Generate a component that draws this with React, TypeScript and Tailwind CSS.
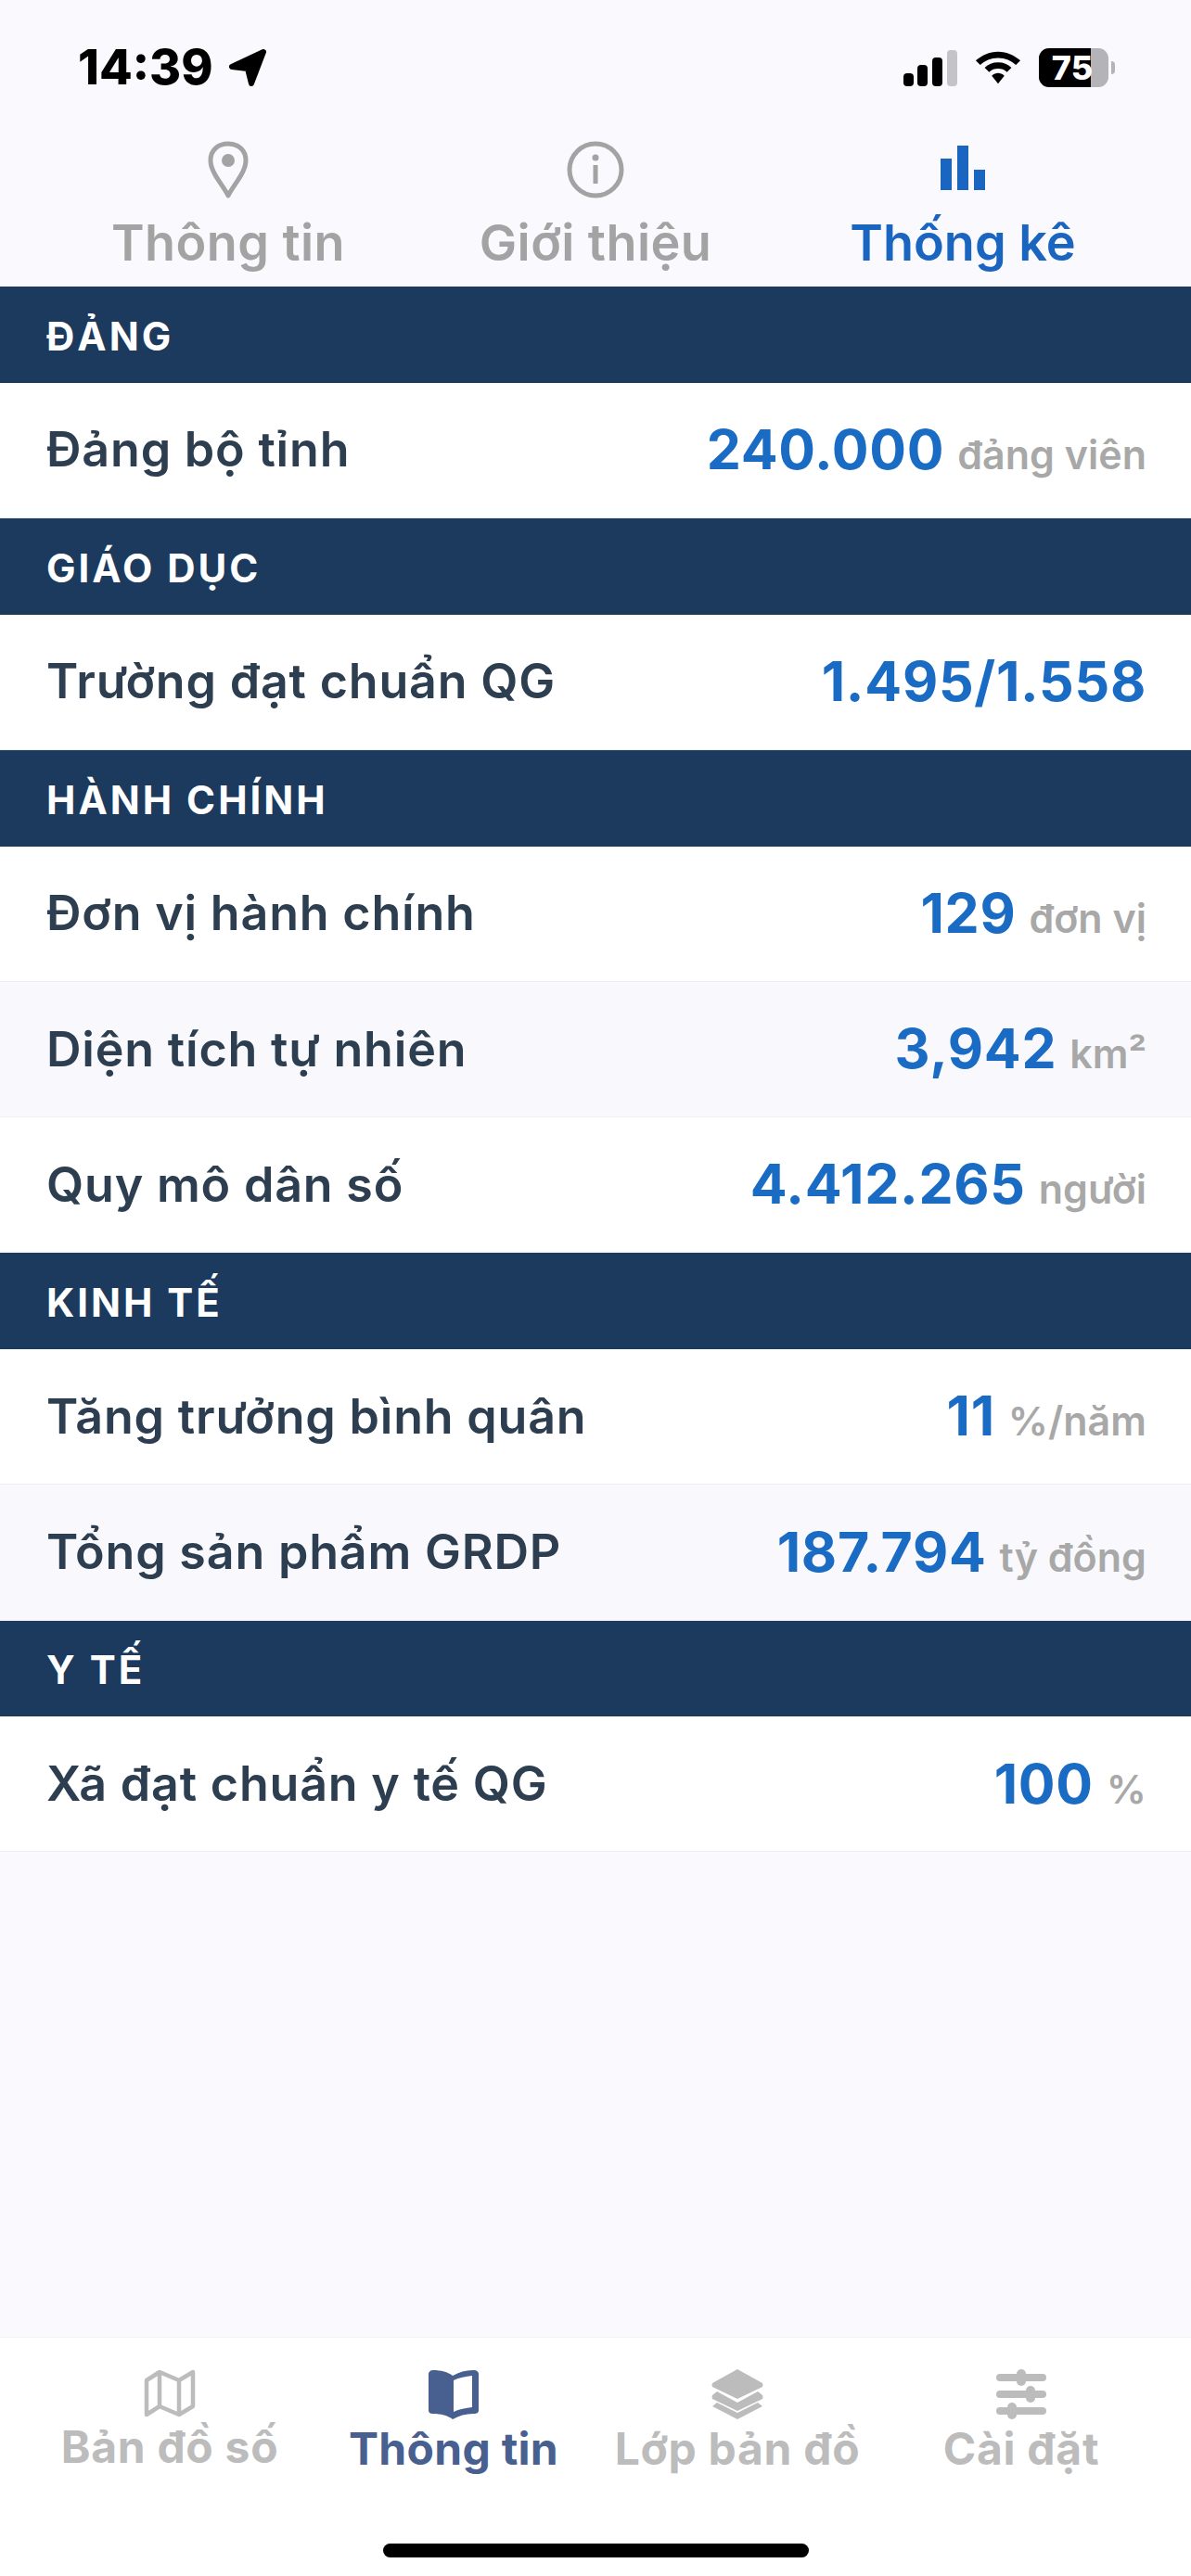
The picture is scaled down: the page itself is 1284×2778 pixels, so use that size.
const font = { fontFamily: "Inter, 'Noto Sans', sans-serif" };

type Row = { label: string; value: string; unit?: string };
type Section = { title: string; rows: Row[] };

const sections: Section[] = [
  { title: "ĐẢNG", rows: [{ label: "Đảng bộ tỉnh", value: "240.000", unit: "đảng viên" }] },
  { title: "GIÁO DỤC", rows: [{ label: "Trường đạt chuẩn QG", value: "1.495/1.558" }] },
  {
    title: "HÀNH CHÍNH",
    rows: [
      { label: "Đơn vị hành chính", value: "129", unit: "đơn vị" },
      { label: "Diện tích tự nhiên", value: "3,942", unit: "km²" },
      { label: "Quy mô dân số", value: "4.412.265", unit: "người" },
    ],
  },
  {
    title: "KINH TẾ",
    rows: [
      { label: "Tăng trưởng bình quân", value: "11", unit: "%/năm" },
      { label: "Tổng sản phẩm GRDP", value: "187.794", unit: "tỷ đồng" },
    ],
  },
  { title: "Y TẾ", rows: [{ label: "Xã đạt chuẩn y tế QG", value: "100", unit: "%" }] },
];

function StatusBar() {
  return (
    <div className="h-[125px] flex items-end justify-between pl-[84px] pr-[82px] pb-[31px]">
      <div className="flex items-center gap-[16px]">
        <span className="text-[52px] leading-[42px] font-extrabold text-black" style={{ fontFamily: "Inter, sans-serif" }}>
          14:39
        </span>
        <svg width="42" height="42" viewBox="0 0 42 42">
          <path d="M38 4 L4 20 L21 22 L25 38 Z" fill="#000" stroke="#000" strokeWidth="6" strokeLinejoin="round" />
        </svg>
      </div>
      <div className="flex items-center gap-[19px]">
        <svg width="58" height="39" viewBox="0 0 58 39">
          <rect x="0" y="25" width="11" height="14" rx="4" fill="#000" />
          <rect x="15" y="16" width="11" height="23" rx="4" fill="#000" />
          <rect x="31" y="8" width="11" height="31" rx="4" fill="#000" />
          <rect x="47" y="0" width="11" height="39" rx="4" fill="#c4c4c8" />
        </svg>
        <svg width="50" height="38" viewBox="0 0 52 38">
          <path d="M26 1 C16 1 8 5 1 11 L6 16 C11 11 18 8 26 8 C34 8 41 11 46 16 L51 11 C44 5 36 1 26 1 Z" fill="#000" />
          <path d="M26 13 C20 13 15 15 11 19 L16 24 C19 21 22 20 26 20 C30 20 33 21 36 24 L41 19 C37 15 32 13 26 13 Z" fill="#000" />
          <path d="M26 25 C24 25 21 26 19 28 L26 37 L33 28 C31 26 28 25 26 25 Z" fill="#000" />
        </svg>
        <div className="flex items-center gap-[3px]">
          <div className="relative w-[75px] h-[42px] rounded-[11px] bg-[#b4b4b8]">
            <div className="absolute inset-y-0 left-0 w-[56px] rounded-l-[11px] bg-black" />
            <span className="absolute inset-0 flex items-center justify-center pr-[3px] text-[36px] leading-[42px] font-extrabold text-white" style={{ fontFamily: "Inter, sans-serif" }}>
              75
            </span>
          </div>
          <div className="w-[4px] h-[14px] rounded-r-full bg-[#b4b4b8]" />
        </div>
      </div>
    </div>
  );
}

function TopTabs() {
  return (
    <div className="h-[184px] grid grid-cols-3 px-[48px]" style={font}>
      <div className="flex flex-col items-center">
        <svg className="mt-[27px]" width="44" height="62" viewBox="0 0 44 62" fill="none">
          <path d="M22 59 C16 47 3 34 3 21 C3 10 11 3 22 3 C33 3 41 10 41 21 C41 34 28 47 22 59 Z" stroke="#a3a3a3" strokeWidth="5" strokeLinejoin="round" />
          <circle cx="22" cy="21" r="7" fill="#a3a3a3" />
        </svg>
        <span className="mt-[18px] text-[54px] leading-[60px] tracking-[0.4px] font-semibold text-[#a3a3a3]">Thông tin</span>
      </div>
      <div className="flex flex-col items-center">
        <svg className="mt-[27px]" width="62" height="62" viewBox="0 0 62 62" fill="none">
          <circle cx="31" cy="31" r="28" stroke="#a3a3a3" strokeWidth="5" />
          <circle cx="31" cy="18" r="3.5" fill="#a3a3a3" />
          <rect x="28.5" y="26" width="5" height="20" fill="#a3a3a3" />
        </svg>
        <span className="mt-[18px] text-[54px] leading-[60px] tracking-[0.4px] font-semibold text-[#a3a3a3]">Giới thiệu</span>
      </div>
      <div className="flex flex-col items-center">
        <svg className="mt-[27px]" width="62" height="62" viewBox="0 0 62 62">
          <rect x="7" y="19" width="12" height="34" fill="#1a65c0" />
          <rect x="25" y="5" width="12" height="48" fill="#1a65c0" />
          <rect x="43" y="31" width="12" height="22" fill="#1a65c0" />
        </svg>
        <span className="mt-[18px] text-[54px] leading-[60px] font-semibold text-[#1a65c0]">Thống kê</span>
      </div>
    </div>
  );
}

function BottomNav() {
  const gray = "#bcbcbc";
  return (
    <div className="mt-auto bg-white h-[258px] flex flex-col border-t border-[#f3f3f6]" style={font}>
      <div className="grid grid-cols-4 px-[30px] pt-[34px]">
        <div className="flex flex-col items-center">
          <svg width="56" height="52" viewBox="0 0 56 52" fill="none">
            <path d="M3 12 L17 3 L38 12 L53 3 L53 40 L38 49 L17 40 L3 49 Z M17 3 L17 40 M38 12 L38 49" stroke={gray} strokeWidth="4.5" strokeLinejoin="round" />
          </svg>
          <span className="mt-[3px] text-[48px] leading-[58px] tracking-[0.7px] font-bold text-[#bcbcbc]">Bản đồ số</span>
        </div>
        <div className="flex flex-col items-center">
          <svg width="56" height="54" viewBox="0 0 56 54">
            <path d="M6 1 C14 1 22 3 27 7 C34 3 42 1 50 1 C53 1 55 3 55 5 L55 44 C55 47 53 48 50 48 C42 48 34 50 27 54 C22 50 14 48 6 48 C3 48 1 47 1 44 L1 5 C1 3 3 1 6 1 Z" fill="#48608f" />
            <path d="M28 12 C34 9 41 8 48 7 L48 41 C41 42 34 43 28 46 Z" fill="#fff" />
          </svg>
          <span className="mt-[3px] text-[48px] leading-[58px] tracking-[0.3px] font-bold text-[#48608f]">Thông tin</span>
        </div>
        <div className="flex flex-col items-center">
          <svg width="56" height="54" viewBox="0 0 56 54" fill={gray}>
            <path d="M28 0 L55 15 Q56 17 55 19 L28 32 L1 19 Q0 17 1 15 Z" />
            <path d="M6 24 L28 36 L50 24 L55 28 Q56 30 55 32 L28 45 L1 32 Q0 30 1 28 Z" />
            <path d="M6 36 L28 47 L50 36 L55 40 L28 54 L1 40 Z" />
          </svg>
          <span className="mt-[3px] text-[48px] leading-[58px] tracking-[0.7px] font-bold text-[#bcbcbc]">Lớp bản đồ</span>
        </div>
        <div className="flex flex-col items-center">
          <svg width="56" height="54" viewBox="0 0 56 54" fill={gray}>
            <rect x="1" y="5" width="54" height="8" rx="4" />
            <rect x="23" y="0" width="10" height="18" rx="5" />
            <rect x="1" y="23" width="54" height="8" rx="4" />
            <rect x="33" y="18" width="10" height="18" rx="5" />
            <rect x="1" y="41" width="54" height="8" rx="4" />
            <rect x="13" y="36" width="10" height="18" rx="5" />
          </svg>
          <span className="mt-[3px] text-[48px] leading-[58px] tracking-[0.7px] font-bold text-[#bcbcbc]">Cài đặt</span>
        </div>
      </div>
      <div className="mt-auto mb-[20px] mx-auto w-[459px] h-[15px] rounded-full bg-black" />
    </div>
  );
}

export default function App() {
  return (
    <div className="w-[1284px] h-[2778px] flex flex-col bg-[#f9f9fe]" style={font}>
      <StatusBar />
      <TopTabs />
      {sections.map((s) => (
        <div key={s.title}>
          <div className="h-[103.8px] bg-[#1c3a5e] flex items-center px-[50px] pt-[3px]">
            <span className="text-[42px] font-bold tracking-[3px] text-white">{s.title}</span>
          </div>
          {s.rows.map((r, i) => (
            <div
              key={r.label}
              className={`h-[146.2px] flex items-center justify-between pl-[50px] pr-[48px] border-b border-[#eeeef2] ${i % 2 === 1 ? "bg-[#f9f9fd]" : "bg-white"}`}
            >
              <span className="text-[52px] tracking-[0.8px] font-semibold text-[#2c3e50]">{r.label}</span>
              <span className="flex items-baseline gap-[14px]">
                <span className="text-[59px] tracking-[0.7px] font-bold text-[#1a6bc4]">{r.value}</span>
                {r.unit && <span className="text-[43px] font-semibold text-[#a8a8a8]">{r.unit}</span>}
              </span>
            </div>
          ))}
        </div>
      ))}
      <BottomNav />
    </div>
  );
}
